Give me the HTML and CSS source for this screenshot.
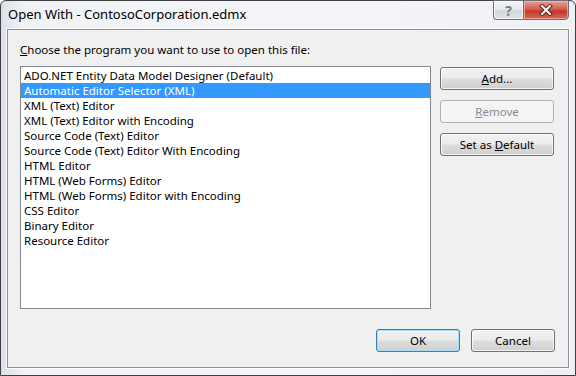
FILE: index.html
```html
<!DOCTYPE html>
<html lang="en">
<head>
    <meta charset="UTF-8">
    <title>Open With</title>
    <link rel="stylesheet" href="styles.css">
</head>
<body>
    <div class="window">
        <div class="titlebar">
            <span class="title">Open With - ContosoCorporation.edmx</span>
            <div class="caption-buttons">
                <button class="cap help">?</button>
                <button class="cap close">
                    <svg width="16" height="12" viewBox="0 0 16 12">
                        <path d="M4 2 L12 10 M12 2 L4 10" stroke="#5a2020" stroke-width="4" stroke-linecap="square" fill="none"/>
                        <path d="M4 2 L12 10 M12 2 L4 10" stroke="#ffffff" stroke-width="2" stroke-linecap="square" fill="none"/>
                    </svg>
                </button>
            </div>
        </div>
        <div class="client">
            <p class="prompt"><u>C</u>hoose the program you want to use to open this file:</p>
            <div class="main-row">
                <ul class="program-list">
                    <li>ADO.NET Entity Data Model Designer (Default)</li>
                    <li class="selected">Automatic Editor Selector (XML)</li>
                    <li>XML (Text) Editor</li>
                    <li>XML (Text) Editor with Encoding</li>
                    <li>Source Code (Text) Editor</li>
                    <li>Source Code (Text) Editor With Encoding</li>
                    <li>HTML Editor</li>
                    <li>HTML (Web Forms) Editor</li>
                    <li>HTML (Web Forms) Editor with Encoding</li>
                    <li>CSS Editor</li>
                    <li>Binary Editor</li>
                    <li>Resource Editor</li>
                </ul>
                <div class="side-buttons">
                    <button class="btn"><u>A</u>dd...</button>
                    <button class="btn" disabled><u>R</u>emove</button>
                    <button class="btn">Set as <u>D</u>efault</button>
                </div>
            </div>
            <div class="footer">
                <button class="btn btn-default">OK</button>
                <button class="btn">Cancel</button>
            </div>
        </div>
    </div>
</body>
</html>
```

FILE: styles.css
```css
:root {
    --frame: #e9edf2;
    --client-bg: #f0f0f0;
    --client-border: #8d9094;
    --list-border: #828790;
    --select: #3399ff;
    --text: #000000;
    --ui-font: "Noto Sans", "Open Sans", sans-serif;
}

* {
    margin: 0;
    padding: 0;
    box-sizing: border-box;
}

body {
    font-family: var(--ui-font);
    font-size: 11.5px;
    color: var(--text);
    background: #ffffff;
}

.window {
    width: 576px;
    height: 376px;
    display: flex;
    flex-direction: column;
    border: 1px solid #3d3f42;
    border-radius: 6px 6px 0 0;
    background: linear-gradient(to right, #dde0ea 0%, #f0f2f6 4%, #f4f5f8 60%, #eef0f4 100%);
}

.titlebar {
    height: 28px;
    display: flex;
    justify-content: space-between;
    align-items: flex-start;
    padding: 0 6px 0 6px;
}

.title {
    padding-top: 5px;
    padding-left: 1px;
    font-size: 13px;
    line-height: 17px;
    color: #000;
}

.caption-buttons {
    display: flex;
    margin-top: -1px;
}

.cap {
    height: 20px;
    border: 1px solid #6b6f75;
    font-family: var(--ui-font);
    display: flex;
    align-items: center;
    justify-content: center;
}

.help {
    width: 30px;
    border-right: none;
    border-radius: 0 0 0 4px;
    background: linear-gradient(#f4f5f7 0%, #e6e8eb 50%, #d3d6db 51%, #dfe2e6 100%);
    color: #7a7f86;
    font-size: 14px;
    font-weight: bold;
    box-shadow: inset 0 0 0 1px rgba(255, 255, 255, 0.7);
}

.close {
    width: 46px;
    border-radius: 0 0 4px 0;
    background: linear-gradient(#e6a096 0%, #d45e50 45%, #c2392a 55%, #d46a5a 100%);
    box-shadow: inset 0 0 0 1px rgba(255, 200, 190, 0.6);
}

.client {
    flex: 1;
    margin: 0 6px 7px 6px;
    background-color: var(--client-bg);
    border: 1px solid var(--client-border);
    box-shadow: 0 0 0 1px rgba(255, 255, 255, 0.8);
    padding: 12px 13px 15px 12px;
    display: flex;
    flex-direction: column;
}

.prompt {
    line-height: 15px;
    margin-bottom: 9px;
}

.main-row {
    display: flex;
    gap: 9px;
}

.program-list {
    list-style: none;
    width: 411px;
    height: 243px;
    background: #ffffff;
    border: 1px solid var(--list-border);
    padding-top: 1px;
}

.program-list li {
    height: 15px;
    line-height: 15px;
    padding-left: 3px;
    white-space: nowrap;
}

.program-list li.selected {
    background-color: var(--select);
    color: #ffffff;
}

.side-buttons {
    display: flex;
    flex-direction: column;
    gap: 10px;
    width: 114px;
    padding-top: 1px;
}

.btn {
    height: 23px;
    font-family: var(--ui-font);
    font-size: 11.5px;
    color: var(--text);
    border: 1px solid #707070;
    border-radius: 3px;
    background: linear-gradient(#f2f2f2 0%, #ebebeb 48%, #dddddd 52%, #cfcfcf 100%);
    box-shadow: inset 0 0 0 1px rgba(255, 255, 255, 0.75);
}

.btn:disabled {
    color: #8a8a8a;
    border-color: #adb2b5;
    background: #f4f4f4;
    box-shadow: none;
}

.footer {
    margin-top: auto;
    display: flex;
    justify-content: flex-end;
    gap: 11px;
}

.footer .btn {
    width: 84px;
}

.btn-default {
    border-color: #3c7fb1;
    box-shadow: inset 0 0 0 1px #a8dcf6;
}
```
